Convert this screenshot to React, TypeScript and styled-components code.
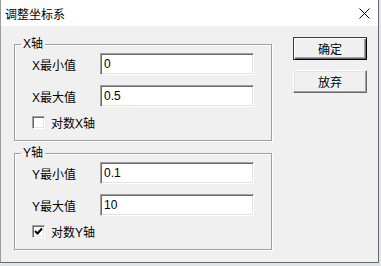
import styled, { createGlobalStyle } from "styled-components";

const GlobalStyle = createGlobalStyle`
  body {
    margin: 0;
    background: #dfe5ec;
    font-family: "Liberation Sans", "Noto Sans CJK SC", sans-serif;
    font-size: 12px;
    color: #000;
  }
`;

const Dialog = styled.div`
  width: 377px;
  height: 262px;
  display: flex;
  flex-direction: column;
  background: #f0f0f0;
  border-left: 1px solid #9a9a9a;
  border-right: 1px solid #6a6a6a;
  border-bottom: 1px solid #6a6a6a;
`;

const TitleBar = styled.div`
  height: 26px;
  flex: none;
  display: flex;
  align-items: center;
  justify-content: space-between;
  background: #fff;
  padding: 0 8px 0 4px;
`;

const Title = styled.span`
  font-size: 12px;
`;

const Body = styled.div`
  display: flex;
  align-items: flex-start;
  padding: 11px 0 0 13px;
  gap: 21px;
`;

const Groups = styled.div`
  display: flex;
  flex-direction: column;
  gap: 5px;
`;

const GroupBox = styled.fieldset`
  margin: 0;
  width: 258px;
  box-sizing: border-box;
  padding: 2px 16px 11px 17px;
  border: 1px solid #a0a0a0;
  box-shadow: 1px 1px 0 #fff, inset 1px 1px 0 #fff;
  display: flex;
  flex-direction: column;
  gap: 10px;
`;

const Legend = styled.legend`
  padding: 0 2px;
  margin-left: -11px;
  line-height: 14px;
`;

const FieldRow = styled.div`
  display: grid;
  grid-template-columns: 68px 154px;
  align-items: center;
`;

const Input = styled.input`
  box-sizing: border-box;
  width: 154px;
  height: 22px;
  margin: 0;
  padding: 0 3px;
  font: inherit;
  background: #fff;
  border-style: solid;
  border-width: 1px;
  border-color: #a0a0a0 #fff #fff #a0a0a0;
  box-shadow: inset 1px 1px 0 #696969, inset -1px -1px 0 #e3e3e3;
  outline: none;
`;

const CheckRow = styled.label<{ $top: number }>`
  display: flex;
  align-items: center;
  gap: 6px;
  margin-top: ${(p) => p.$top}px;
  height: 14px;
`;

const CheckBox = styled.span`
  box-sizing: border-box;
  width: 13px;
  height: 13px;
  display: flex;
  align-items: center;
  justify-content: center;
  background: #fff;
  border-style: solid;
  border-width: 1px;
  border-color: #a0a0a0 #fff #fff #a0a0a0;
  box-shadow: inset 1px 1px 0 #696969, inset -1px -1px 0 #e3e3e3;
`;

const Buttons = styled.div`
  display: flex;
  flex-direction: column;
  gap: 10px;
`;

const Button = styled.button<{ $default?: boolean }>`
  box-sizing: border-box;
  width: 74px;
  height: 23px;
  margin: 0;
  padding: 0;
  font: inherit;
  background: #f0f0f0;
  border-style: solid;
  border-width: 1px;
  border-color: ${(p) =>
    p.$default ? "#3c3c3c #000 #000 #3c3c3c" : "#fff #696969 #696969 #fff"};
  box-shadow: ${(p) =>
    p.$default
      ? "inset 1px 1px 0 #fff, inset -1px -1px 0 #696969, inset -2px -2px 0 #a0a0a0"
      : "inset -1px -1px 0 #a0a0a0, inset 1px 1px 0 #e3e3e3"};
`;

function CloseIcon() {
  return (
    <svg width="11" height="11" viewBox="0 0 11 11">
      <path d="M0.5 0.5 L10.5 10.5 M10.5 0.5 L0.5 10.5" stroke="#000" strokeWidth="1" />
    </svg>
  );
}

function Check({ checked }: { checked: boolean }) {
  return (
    <CheckBox>
      {checked ? (
        <svg width="9" height="9" viewBox="0 0 9 9">
          <path d="M1 4 L3.5 6.5 L8 1.5" fill="none" stroke="#000" strokeWidth="2" />
        </svg>
      ) : null}
    </CheckBox>
  );
}

type AxisProps = {
  axis: string;
  min: string;
  max: string;
  log: boolean;
};

function AxisGroup({ axis, min, max, log }: AxisProps) {
  return (
    <GroupBox>
      <Legend>{axis}轴</Legend>
      <FieldRow>
        <span>{axis}最小值</span>
        <Input defaultValue={min} />
      </FieldRow>
      <FieldRow>
        <span>{axis}最大值</span>
        <Input defaultValue={max} />
      </FieldRow>
      <CheckRow $top={-2}>
        <Check checked={log} />
        <span>对数{axis}轴</span>
      </CheckRow>
    </GroupBox>
  );
}

export default function App() {
  return (
    <>
      <GlobalStyle />
      <Dialog>
        <TitleBar>
          <Title>调整坐标系</Title>
          <CloseIcon />
        </TitleBar>
        <Body>
          <Groups>
            <AxisGroup axis="X" min="0" max="0.5" log={false} />
            <AxisGroup axis="Y" min="0.1" max="10" log={true} />
          </Groups>
          <Buttons>
            <Button $default>确定</Button>
            <Button>放弃</Button>
          </Buttons>
        </Body>
      </Dialog>
    </>
  );
}
